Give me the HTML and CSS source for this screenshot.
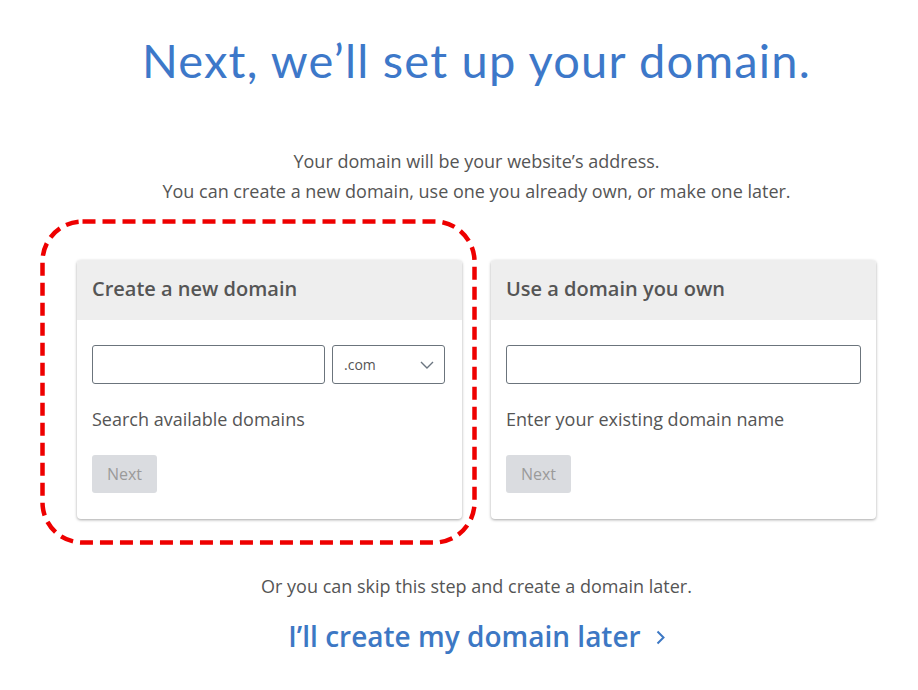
FILE: index.html
```html
<!DOCTYPE html>
<html lang="en">
<head>
  <meta charset="UTF-8" />
  <meta name="viewport" content="width=device-width, initial-scale=1.0"/>
  <title>Set up your domain</title>
  <link rel="stylesheet" href="styles.css">
</head>
<body>
  <main class="page">
    <h1 class="title">Next, we’ll set up your domain.</h1>

    <p class="intro">
      Your domain will be your website’s address.<br>
      You can create a new domain, use one you already own, or make one later.
    </p>

    <div class="cards">
      <section class="card card-marked">
        <svg class="mark" width="437" height="326" viewBox="0 0 437 326">
          <rect x="2.5" y="2.5" width="432" height="321" rx="40" ry="40"
                fill="none" stroke="#ee0000" stroke-width="4.5" stroke-dasharray="13 7"/>
        </svg>
        <h2 class="card-head">Create a new domain</h2>
        <div class="card-body">
          <div class="field-row">
            <input type="text" class="field field-name">
            <div class="field field-tld">
              <span>.com</span>
              <svg width="14" height="8" viewBox="0 0 14 8"><path d="M1 1l6 6 6-6" fill="none" stroke="#6b7580" stroke-width="1.4"/></svg>
            </div>
          </div>
          <p class="hint">Search available domains</p>
          <button class="btn-next" disabled>Next</button>
        </div>
      </section>

      <section class="card">
        <h2 class="card-head">Use a domain you own</h2>
        <div class="card-body">
          <div class="field-row">
            <input type="text" class="field field-full">
          </div>
          <p class="hint">Enter your existing domain name</p>
          <button class="btn-next" disabled>Next</button>
        </div>
      </section>
    </div>

    <p class="skip">Or you can skip this step and create a domain later.</p>
    <a class="later" href="#">I’ll create my domain later
      <svg class="chev" width="9" height="15" viewBox="0 0 9 15"><path d="M1.5 1.5l6 6-6 6" fill="none" stroke="#3d78c4" stroke-width="2"/></svg>
    </a>
  </main>
</body>
</html>
```

FILE: styles.css
```css
html, body {
  margin: 0; padding: 0;
  background: #fff;
  font-family: 'Open Sans', sans-serif;
  color: #555;
}
.page {
  padding-left: 35px;
  text-align: center;
  display: flex; flex-direction: column; align-items: center;
}
.title {
  font-family: Lato, sans-serif;
  font-weight: 400;
  font-size: 47px;
  letter-spacing: 1.2px;
  color: #3d78c9;
  margin: 30px 0 0;
  line-height: 60px;
}
.intro {
  font-size: 18px; line-height: 30px;
  margin: 56px 0 0;
}
.cards {
  display: flex; gap: 29px;
  margin-top: 54px;
  text-align: left;
}
.card {
  position: relative;
  width: 385px;
  height: 259px;
  background: #fff;
  border-radius: 4px;
  box-shadow: 0 1px 3px rgba(0,0,0,0.35);
}
.card .mark { position: absolute; left: -37px; top: -41px; pointer-events: none; }
.card-head {
  margin: 0;
  height: 60px; line-height: 58px;
  padding: 0 15px;
  background: #eeeeee;
  border-radius: 4px 4px 0 0;
  font-size: 20px; font-weight: 600;
  color: #555;
}
.card-body { padding: 25px 15px 26px; }
.field-row { display: flex; gap: 7px; }
.field {
  box-sizing: border-box;
  height: 39px;
  border: 1px solid #6b747c;
  border-radius: 3px;
  background: #fff;
  font: inherit;
}
.field-name { width: 233px; }
.field-full { width: 100%; }
.field-tld {
  width: 113px;
  display: flex; align-items: center; justify-content: space-between;
  padding: 0 10px 0 11px;
  font-size: 14px; color: #555;
}
.hint {
  font-size: 18px; line-height: 24px;
  margin: 23px 0 0;
}
.btn-next {
  margin-top: 24px;
  width: 65px; height: 38px;
  border: none; border-radius: 3px;
  background: #dadce0;
  color: #9a9a9a;
  font: 16px 'Open Sans', sans-serif;
}
.skip {
  font-size: 18px; line-height: 24px;
  margin: 55px 0 0;
}
.later {
  margin-top: 20px;
  display: flex; align-items: center; gap: 15px;
  font-size: 28px; font-weight: 600; line-height: 36px;
  color: #3d78c4;
  text-decoration: none;
}
.later .chev { margin-top: 3px; }
```
